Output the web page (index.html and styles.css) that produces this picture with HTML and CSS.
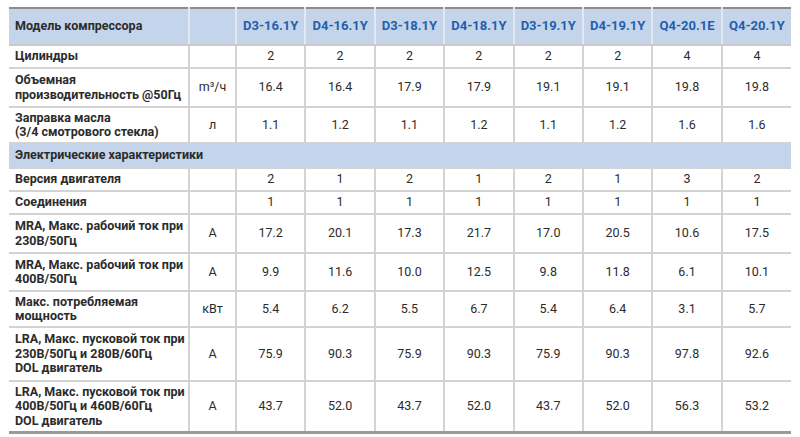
FILE: index.html
```html
<!DOCTYPE html>
<html lang="ru">
<head>
<meta charset="utf-8">
<link rel="stylesheet" href="styles.css">
</head>
<body>
<table class="spec">
  <colgroup>
    <col class="c-label"><col class="c-unit">
    <col class="c-val"><col class="c-val"><col class="c-val"><col class="c-val">
    <col class="c-val"><col class="c-val"><col class="c-val"><col class="c-val">
  </colgroup>
  <thead>
    <tr class="head">
      <th class="label">Модель компрессора</th>
      <th></th>
      <th>D3-16.1Y</th><th>D4-16.1Y</th><th>D3-18.1Y</th><th>D4-18.1Y</th>
      <th>D3-19.1Y</th><th>D4-19.1Y</th><th>Q4-20.1E</th><th>Q4-20.1Y</th>
    </tr>
  </thead>
  <tbody>
    <tr class="h23">
      <td class="label">Цилиндры</td><td></td>
      <td>2</td><td>2</td><td>2</td><td>2</td><td>2</td><td>2</td><td>4</td><td>4</td>
    </tr>
    <tr class="h39">
      <td class="label">Объемная<br>производительность @50Гц</td><td>m³/ч</td>
      <td>16.4</td><td>16.4</td><td>17.9</td><td>17.9</td><td>19.1</td><td>19.1</td><td>19.8</td><td>19.8</td>
    </tr>
    <tr class="h36">
      <td class="label">Заправка масла<br>(3/4 смотрового стекла)</td><td>л</td>
      <td>1.1</td><td>1.2</td><td>1.1</td><td>1.2</td><td>1.1</td><td>1.2</td><td>1.6</td><td>1.6</td>
    </tr>
    <tr class="section h25">
      <td colspan="10" class="label">Электрические характеристики</td>
    </tr>
    <tr class="h23">
      <td class="label">Версия двигателя</td><td></td>
      <td>2</td><td>1</td><td>2</td><td>1</td><td>2</td><td>1</td><td>3</td><td>2</td>
    </tr>
    <tr class="h23">
      <td class="label">Соединения</td><td></td>
      <td>1</td><td>1</td><td>1</td><td>1</td><td>1</td><td>1</td><td>1</td><td>1</td>
    </tr>
    <tr class="h39">
      <td class="label">MRA, Макс. рабочий ток при<br>230В/50Гц</td><td>A</td>
      <td>17.2</td><td>20.1</td><td>17.3</td><td>21.7</td><td>17.0</td><td>20.5</td><td>10.6</td><td>17.5</td>
    </tr>
    <tr class="h38">
      <td class="label">MRA, Макс. рабочий ток при<br>400В/50Гц</td><td>A</td>
      <td>9.9</td><td>11.6</td><td>10.0</td><td>12.5</td><td>9.8</td><td>11.8</td><td>6.1</td><td>10.1</td>
    </tr>
    <tr class="h36">
      <td class="label">Макс. потребляемая<br>мощность</td><td>кВт</td>
      <td>5.4</td><td>6.2</td><td>5.5</td><td>6.7</td><td>5.4</td><td>6.4</td><td>3.1</td><td>5.7</td>
    </tr>
    <tr class="h54">
      <td class="label">LRA, Макс. пусковой ток при<br>230В/50Гц и 280В/60Гц<br>DOL двигатель</td><td>A</td>
      <td>75.9</td><td>90.3</td><td>75.9</td><td>90.3</td><td>75.9</td><td>90.3</td><td>97.8</td><td>92.6</td>
    </tr>
    <tr class="last h52">
      <td class="label">LRA, Макс. пусковой ток при<br>400В/50Гц и 460В/60Гц<br>DOL двигатель</td><td>A</td>
      <td>43.7</td><td>52.0</td><td>43.7</td><td>52.0</td><td>43.7</td><td>52.0</td><td>56.3</td><td>53.2</td>
    </tr>
  </tbody>
</table>
</body>
</html>
```
FILE: styles.css
```css
html, body {
  margin: 0;
  padding: 0;
  background: #ffffff;
}
body {
  padding: 7px 9px 0 9px;
  font-family: Roboto, "Liberation Sans", Arial, sans-serif;
  color: #2b2b2b;
}
.spec {
  width: 782px;
  table-layout: fixed;
  border-collapse: collapse;
  border-top: 2px solid #8c8c8c;
  border-bottom: 3px solid #9a9a9a;
}
.c-label { width: 180px; }
.c-unit { width: 47px; }
.c-val { width: 69.4px; }
.spec th, .spec td {
  border: 2px solid #d3d3d3;
  border-top: 0;
  text-align: center;
  vertical-align: middle;
  font-size: 12.5px;
  line-height: 14.5px;
  padding: 0 4px;
  font-weight: 400;
}
.spec td:first-child, .spec th:first-child { border-left: 0; }
.spec td:last-child, .spec th:last-child { border-right: 0; }
.spec .label {
  text-align: left;
  font-weight: 700;
  font-size: 12.5px;
  padding-left: 6px;
  padding-right: 2px;
  white-space: nowrap;
}
.h23 { height: 23px; }
.h25 { height: 25px; }
.h36 { height: 36px; }
.h38 { height: 38px; }
.h39 { height: 39px; }
.h52 { height: 51px; }
.h54 { height: 54px; }
.head th {
  height: 35px;
  background: #c4d4ea;
  color: #1f5fae;
  font-weight: 700;
  font-size: 13px;
  border-left-color: #e2e8f1;
  border-right-color: #e2e8f1;
  border-bottom: 2px solid #c9c9c9;
}
.head th.label {
  color: #2b2b2b;
  font-size: 12.5px;
}
.section td {
  background: #c4d4ea;
  border-left: 0;
  border-right: 0;
}
.spec tr.last td { border-bottom: 0; }
```
